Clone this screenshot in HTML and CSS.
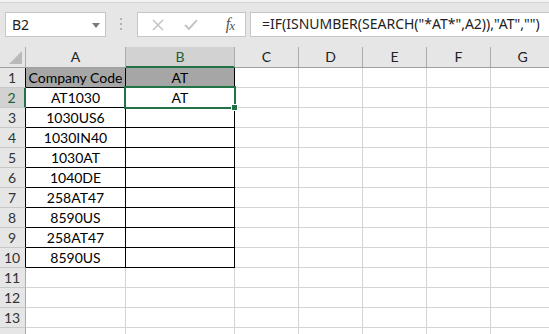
FILE: index.html
```html
<!DOCTYPE html>
<html lang="en">
<head>
<meta charset="UTF-8">
<title>Excel - SEARCH</title>
<link rel="stylesheet" href="styles.css">
</head>
<body>

<div class="topline"></div>
<div class="toolbar">
  <div class="namebox">
    <span>B2</span>
    <svg class="drop" width="8" height="5" viewBox="0 0 8 5"><path d="M0 0h8L4 5z" fill="#7a7a7a"/></svg>
  </div>
  <div class="grip">
    <svg width="3" height="13" viewBox="0 0 3 13"><rect x="0" y="0" width="2" height="2" fill="#b2b2b2"/><rect x="0" y="5" width="2" height="2" fill="#b2b2b2"/><rect x="0" y="10" width="2" height="2" fill="#b2b2b2"/></svg>
  </div>
  <div class="fxbtns">
    <svg width="12" height="12" viewBox="0 0 12 12"><path d="M1 1l10 10M11 1L1 11" stroke="#c4c4c4" stroke-width="1.6"/></svg>
    <svg width="14" height="11" viewBox="0 0 14 11"><path d="M1 6l4 4 8-9" stroke="#c4c4c4" stroke-width="2" fill="none"/></svg>
    <span class="fx">f<span class="fx-x">x</span></span>
  </div>
  <div class="formula">=IF(ISNUMBER(SEARCH("*AT*",A2)),"AT","")</div>
</div>

<div class="sheet">
  <div class="corner"><svg width="13" height="13" viewBox="0 0 13 13"><path d="M13 0v13H0z" fill="#b9b9b9"/></svg></div>
  <div class="colhdr">A</div>
  <div class="colhdr sel">B</div>
  <div class="colhdr">C</div>
  <div class="colhdr">D</div>
  <div class="colhdr">E</div>
  <div class="colhdr">F</div>
  <div class="colhdr">G</div>

  <div class="rowhdr in">1</div>
  <div class="cell data head">Company Code</div>
  <div class="cell data head">AT</div>
  <div class="cell"></div><div class="cell"></div><div class="cell"></div><div class="cell"></div><div class="cell"></div>

  <div class="rowhdr in sel">2</div>
  <div class="cell data">AT1030</div>
  <div class="cell data">AT</div>
  <div class="cell"></div><div class="cell"></div><div class="cell"></div><div class="cell"></div><div class="cell"></div>

  <div class="rowhdr in">3</div>
  <div class="cell data">1030US6</div>
  <div class="cell data"></div>
  <div class="cell"></div><div class="cell"></div><div class="cell"></div><div class="cell"></div><div class="cell"></div>

  <div class="rowhdr in">4</div>
  <div class="cell data">1030IN40</div>
  <div class="cell data"></div>
  <div class="cell"></div><div class="cell"></div><div class="cell"></div><div class="cell"></div><div class="cell"></div>

  <div class="rowhdr in">5</div>
  <div class="cell data">1030AT</div>
  <div class="cell data"></div>
  <div class="cell"></div><div class="cell"></div><div class="cell"></div><div class="cell"></div><div class="cell"></div>

  <div class="rowhdr in">6</div>
  <div class="cell data">1040DE</div>
  <div class="cell data"></div>
  <div class="cell"></div><div class="cell"></div><div class="cell"></div><div class="cell"></div><div class="cell"></div>

  <div class="rowhdr in">7</div>
  <div class="cell data">258AT47</div>
  <div class="cell data"></div>
  <div class="cell"></div><div class="cell"></div><div class="cell"></div><div class="cell"></div><div class="cell"></div>

  <div class="rowhdr in">8</div>
  <div class="cell data">8590US</div>
  <div class="cell data"></div>
  <div class="cell"></div><div class="cell"></div><div class="cell"></div><div class="cell"></div><div class="cell"></div>

  <div class="rowhdr in">9</div>
  <div class="cell data">258AT47</div>
  <div class="cell data"></div>
  <div class="cell"></div><div class="cell"></div><div class="cell"></div><div class="cell"></div><div class="cell"></div>

  <div class="rowhdr in">10</div>
  <div class="cell data">8590US</div>
  <div class="cell data"></div>
  <div class="cell"></div><div class="cell"></div><div class="cell"></div><div class="cell"></div><div class="cell"></div>

  <div class="rowhdr">11</div>
  <div class="cell"></div><div class="cell"></div><div class="cell"></div><div class="cell"></div><div class="cell"></div><div class="cell"></div><div class="cell"></div>

  <div class="rowhdr">12</div>
  <div class="cell"></div><div class="cell"></div><div class="cell"></div><div class="cell"></div><div class="cell"></div><div class="cell"></div><div class="cell"></div>

  <div class="rowhdr">13</div>
  <div class="cell"></div><div class="cell"></div><div class="cell"></div><div class="cell"></div><div class="cell"></div><div class="cell"></div><div class="cell"></div>

  <!-- row 14 is cut by the window edge, its number is not visible -->
  <div class="rowhdr"></div>
  <div class="cell"></div><div class="cell"></div><div class="cell"></div><div class="cell"></div><div class="cell"></div><div class="cell"></div><div class="cell"></div>

  <!-- active cell B2 -->
  <div class="active"><span class="handle"></span></div>
</div>

</body>
</html>
```

FILE: styles.css
```css
html, body {
  margin: 0;
  padding: 0;
  overflow: hidden;
  background-color: #e6e6e6;
}
body {
  width: 549px;
  height: 334px;
  font-family: "Noto Sans", Arial, sans-serif;
}
.topline {
  height: 2px;
  background-color: #f3f3f3;
  border-bottom: 1px solid #d5d5d5;
}
.toolbar {
  display: flex;
  align-items: flex-start;
  height: 44px;
  padding: 9px 0 0 5px;
  box-sizing: border-box;
}
.namebox {
  width: 101px;
  height: 25px;
  box-sizing: border-box;
  background-color: #fff;
  border: 1px solid #c6c6c6;
  display: flex;
  align-items: center;
  justify-content: space-between;
  padding: 0 5px 0 6px;
  font-size: 14px;
  color: #222;
}
.namebox .drop {
  margin-top: 1px;
}
.grip {
  width: 31px;
  height: 25px;
  display: flex;
  align-items: center;
  justify-content: center;
}
.fxbtns {
  width: 109px;
  height: 25px;
  box-sizing: border-box;
  background-color: #fff;
  border: 1px solid #c6c6c6;
  display: flex;
  align-items: center;
  padding: 0 10px 0 14px;
  gap: 20px;
}
.fx {
  margin-left: 8px;
  font-family: "Liberation Serif", serif;
  font-style: italic;
  font-size: 16px;
  line-height: 16px;
  color: #555;
}
.fx-x {
  font-size: 13px;
  position: relative;
  top: 1px;
  margin-left: -1px;
}
.formula {
  flex: 1;
  height: 25px;
  margin-left: 4px;
  box-sizing: border-box;
  background-color: #fff;
  border: 1px solid #c6c6c6;
  border-right: none;
  padding-left: 11px;
  font-size: 14px;
  line-height: 22px;
  color: #222;
  white-space: nowrap;
  overflow: hidden;
}
.sheet {
  position: relative;
  display: grid;
  grid-template-columns: 26px 100px 109px 64px 64px 64px 64px 64px;
  grid-template-rows: 21px repeat(14, 20px);
  width: 549px;
  overflow: hidden;
  background-color: #fff;
  font-family: Lato, "Liberation Sans", sans-serif;
  font-size: 14px;
}
.sheet > div {
  box-sizing: border-box;
}
.corner {
  background-color: #e6e6e6;
  border-right: 1px solid #ababab;
  border-bottom: 1px solid #9f9f9f;
  display: flex;
  align-items: flex-end;
  justify-content: flex-end;
  padding: 0 3px 3px 0;
}
.corner svg {
  display: block;
}
.colhdr {
  background-color: #e6e6e6;
  border-right: 1px solid #ababab;
  border-bottom: 1px solid #9f9f9f;
  text-align: center;
  line-height: 20px;
  color: #222;
}
.colhdr.sel {
  background-color: #d2d2d2;
  border-bottom: 2px solid #217346;
  color: #1e5e3a;
}
.rowhdr {
  background-color: #e6e6e6;
  border-right: 1px solid #ababab;
  border-bottom: 1px solid #c8c8c8;
  text-align: center;
  line-height: 19px;
  color: #333;
  padding-right: 1px;
}
.rowhdr.in {
  border-right-color: #000;
}
.rowhdr.sel {
  background-color: #d2d2d2;
  border-right: 2px solid #217346;
  color: #1e5e3a;
}
.cell {
  border-right: 1px solid #d4d4d4;
  border-bottom: 1px solid #d4d4d4;
  text-align: center;
  line-height: 19px;
  color: #000;
  white-space: nowrap;
}
.cell.data {
  border-right-color: #000;
  border-bottom-color: #000;
}
.cell.head {
  background-color: #a6a6a6;
}
.active {
  position: absolute;
  left: 124px;
  top: 39px;
  width: 112px;
  height: 23px;
  box-sizing: border-box;
  border: 2px solid #217346;
}
.handle {
  position: absolute;
  right: -4px;
  bottom: -4px;
  width: 5px;
  height: 5px;
  background-color: #217346;
  border: 1px solid #fff;
}
```
